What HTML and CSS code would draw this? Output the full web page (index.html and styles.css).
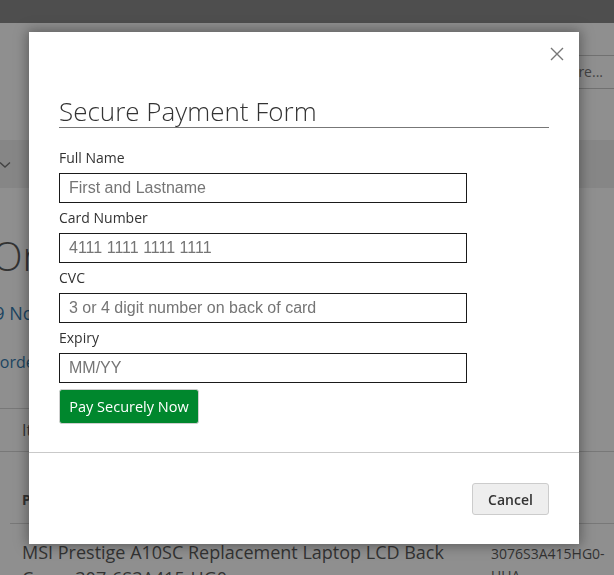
FILE: index.html
```html
<!DOCTYPE html>
<html lang="en">
<head>
<meta charset="utf-8">
<title>Secure Payment Form</title>
<link rel="stylesheet" href="styles.css">
</head>
<body>
<div class="page">
  <div class="panel"></div>
  <header class="header">
    <div class="search">Search entire store here...</div>
  </header>
  <nav class="nav">
    <svg class="chev" width="12" height="8" viewBox="0 0 12 8"><polyline points="1,1.5 6,6 11,1.5" fill="none" stroke="#555" stroke-width="1.4"/></svg>
  </nav>
  <main class="main">
    <h1 class="order-title">Order # 000000019</h1>
    <div class="order-date">19 November 2019</div>
    <div class="order-actions"><a class="link">Reorder</a></div>
    <div class="tabs">
      <div class="tab">Items Ordered</div>
    </div>
    <div class="tab-content">
      <div class="table-head">
        <div class="col-name">Product Name</div>
        <div class="col-sku">SKU</div>
      </div>
      <div class="table-row">
        <div class="col-name item-name">MSI Prestige A10SC Replacement Laptop LCD Back Cover 307-6S3A415-HG0</div>
        <div class="col-sku item-sku">3076S3A415HG0-UUA</div>
      </div>
    </div>
  </main>
</div>

<div class="overlay"></div>

<div class="modal" role="dialog">
  <button class="close" type="button" aria-label="Close">
    <svg width="14" height="14" viewBox="0 0 14 14"><path d="M1 1 L13 13 M13 1 L1 13" stroke="#777" stroke-width="1.4" fill="none"/></svg>
  </button>
  <div class="modal-content">
    <h2 class="form-title">Secure Payment Form</h2>
    <form class="pay-form">
      <label class="field-label">Full Name</label>
      <input class="field-input" type="text" placeholder="First and Lastname">
      <label class="field-label">Card Number</label>
      <input class="field-input" type="text" placeholder="4111 1111 1111 1111">
      <label class="field-label">CVC</label>
      <input class="field-input" type="text" placeholder="3 or 4 digit number on back of card">
      <label class="field-label">Expiry</label>
      <input class="field-input" type="text" placeholder="MM/YY">
      <button class="pay-btn" type="button">Pay Securely Now</button>
    </form>
  </div>
  <footer class="modal-footer">
    <button class="cancel-btn" type="button">Cancel</button>
  </footer>
</div>
</body>
</html>
```

FILE: styles.css
```css
* { box-sizing: border-box; }

html, body {
  margin: 0;
  padding: 0;
  overflow: hidden;
  height: 575px;
}

body {
  font-family: "Open Sans", "DejaVu Sans", sans-serif;
  color: #333;
  background: #fff;
}

/* ---------- background page ---------- */
.page {
  width: 614px;
}

.panel {
  height: 23px;
  background: #707070;
}

.header {
  height: 117px;
  display: flex;
  justify-content: flex-end;
  align-items: flex-start;
}

.search {
  margin-top: 32px;
  width: 260px;
  height: 34px;
  border-top: 1px solid #bdbdbd;
  border-bottom: 1px solid #bdbdbd;
  font-size: 14px;
  line-height: 32px;
  text-align: right;
  padding-right: 11px;
  color: #575757;
  white-space: nowrap;
}

.nav {
  height: 48px;
  background: #ececec;
  display: flex;
  align-items: center;
}

.chev {
  margin-top: 2px;
  margin-left: -1px;
}

.main {
  padding-top: 44px;
}

.order-title {
  margin: 0 0 0 -8px;
  font-size: 40px;
  line-height: 48px;
  font-weight: 300;
  white-space: nowrap;
}

.order-date {
  margin: 21px 0 0 -16px;
  font-size: 18px;
  line-height: 24px;
  color: #005a99;
  white-space: nowrap;
}

.order-actions {
  margin: 26px 0 0 -19px;
  font-size: 16px;
  line-height: 22px;
}

.link {
  color: #005a99;
}

.tabs {
  margin-top: 35px;
  display: flex;
}

.tab {
  width: 240px;
  height: 43px;
  border-top: 1px solid #ccc;
  padding-left: 22px;
  font-size: 16px;
  line-height: 42px;
  color: #333;
}

.tab-content {
  border-top: 1px solid #ccc;
  padding-left: 10px;
}

.table-head,
.table-row {
  display: flex;
}

.table-head {
  padding-top: 38px;
  height: 72px;
  border-bottom: 1px solid #ccc;
  font-size: 14px;
  font-weight: 700;
  line-height: 20px;
}

.col-name {
  width: 469px;
  padding-left: 12px;
}

.col-sku {
  flex: 1;
  padding-left: 12px;
}

.table-row {
  padding-top: 15px;
}

.item-name {
  font-size: 18px;
  line-height: 26px;
  font-weight: 400;
}

.item-sku {
  font-size: 14px;
  line-height: 22px;
  padding-top: 4px;
}

/* ---------- overlay & modal ---------- */
.overlay {
  position: fixed;
  inset: 0;
  background: rgba(51, 51, 51, 0.55);
}

.modal {
  position: fixed;
  left: 29px;
  top: 32px;
  width: 550px;
  height: 512px;
  background: #fff;
  box-shadow: 0 0 12px 2px rgba(0, 0, 0, 0.35);
  display: flex;
  flex-direction: column;
}

.close {
  position: absolute;
  top: 15px;
  right: 15px;
  width: 14px;
  height: 14px;
  padding: 0;
  border: 0;
  background: none;
  display: flex;
}

.modal-content {
  padding: 64px 30px 28px;
}

.form-title {
  margin: 0;
  font-size: 26px;
  line-height: 31px;
  font-weight: 300;
  color: #333;
  border-bottom: 1px solid #777;
}

.pay-form {
  margin-top: 20px;
  display: flex;
  flex-direction: column;
  align-items: flex-start;
  gap: 5px;
}

.field-label {
  font-size: 14px;
  line-height: 20px;
  color: #333;
}

.field-input {
  width: 408px;
  height: 30px;
  border: 1px solid #1a1a1a;
  border-radius: 0;
  padding: 0 9px;
  font-family: "Liberation Sans", Arial, sans-serif;
  font-size: 16px;
  color: #333;
  background: #fff;
  outline: none;
}

.field-input::placeholder {
  color: #757575;
}

.pay-btn {
  margin-top: 1px;
  height: 35px;
  width: 140px;
  padding: 0;
  background: #00872d;
  border: 1px solid #cfcfcf;
  border-radius: 3px;
  color: #fff;
  font-family: "Open Sans", sans-serif;
  font-size: 14.5px;
  font-weight: 500;
}

.modal-footer {
  border-top: 1px solid #c9c9c9;
  padding: 30px 30px 29px;
  display: flex;
  justify-content: flex-end;
}

.cancel-btn {
  width: 77px;
  height: 32px;
  background: #eee;
  border: 1px solid #ccc;
  border-radius: 3px;
  color: #333;
  font-family: "Open Sans", sans-serif;
  font-size: 14px;
  font-weight: 600;
}
```
